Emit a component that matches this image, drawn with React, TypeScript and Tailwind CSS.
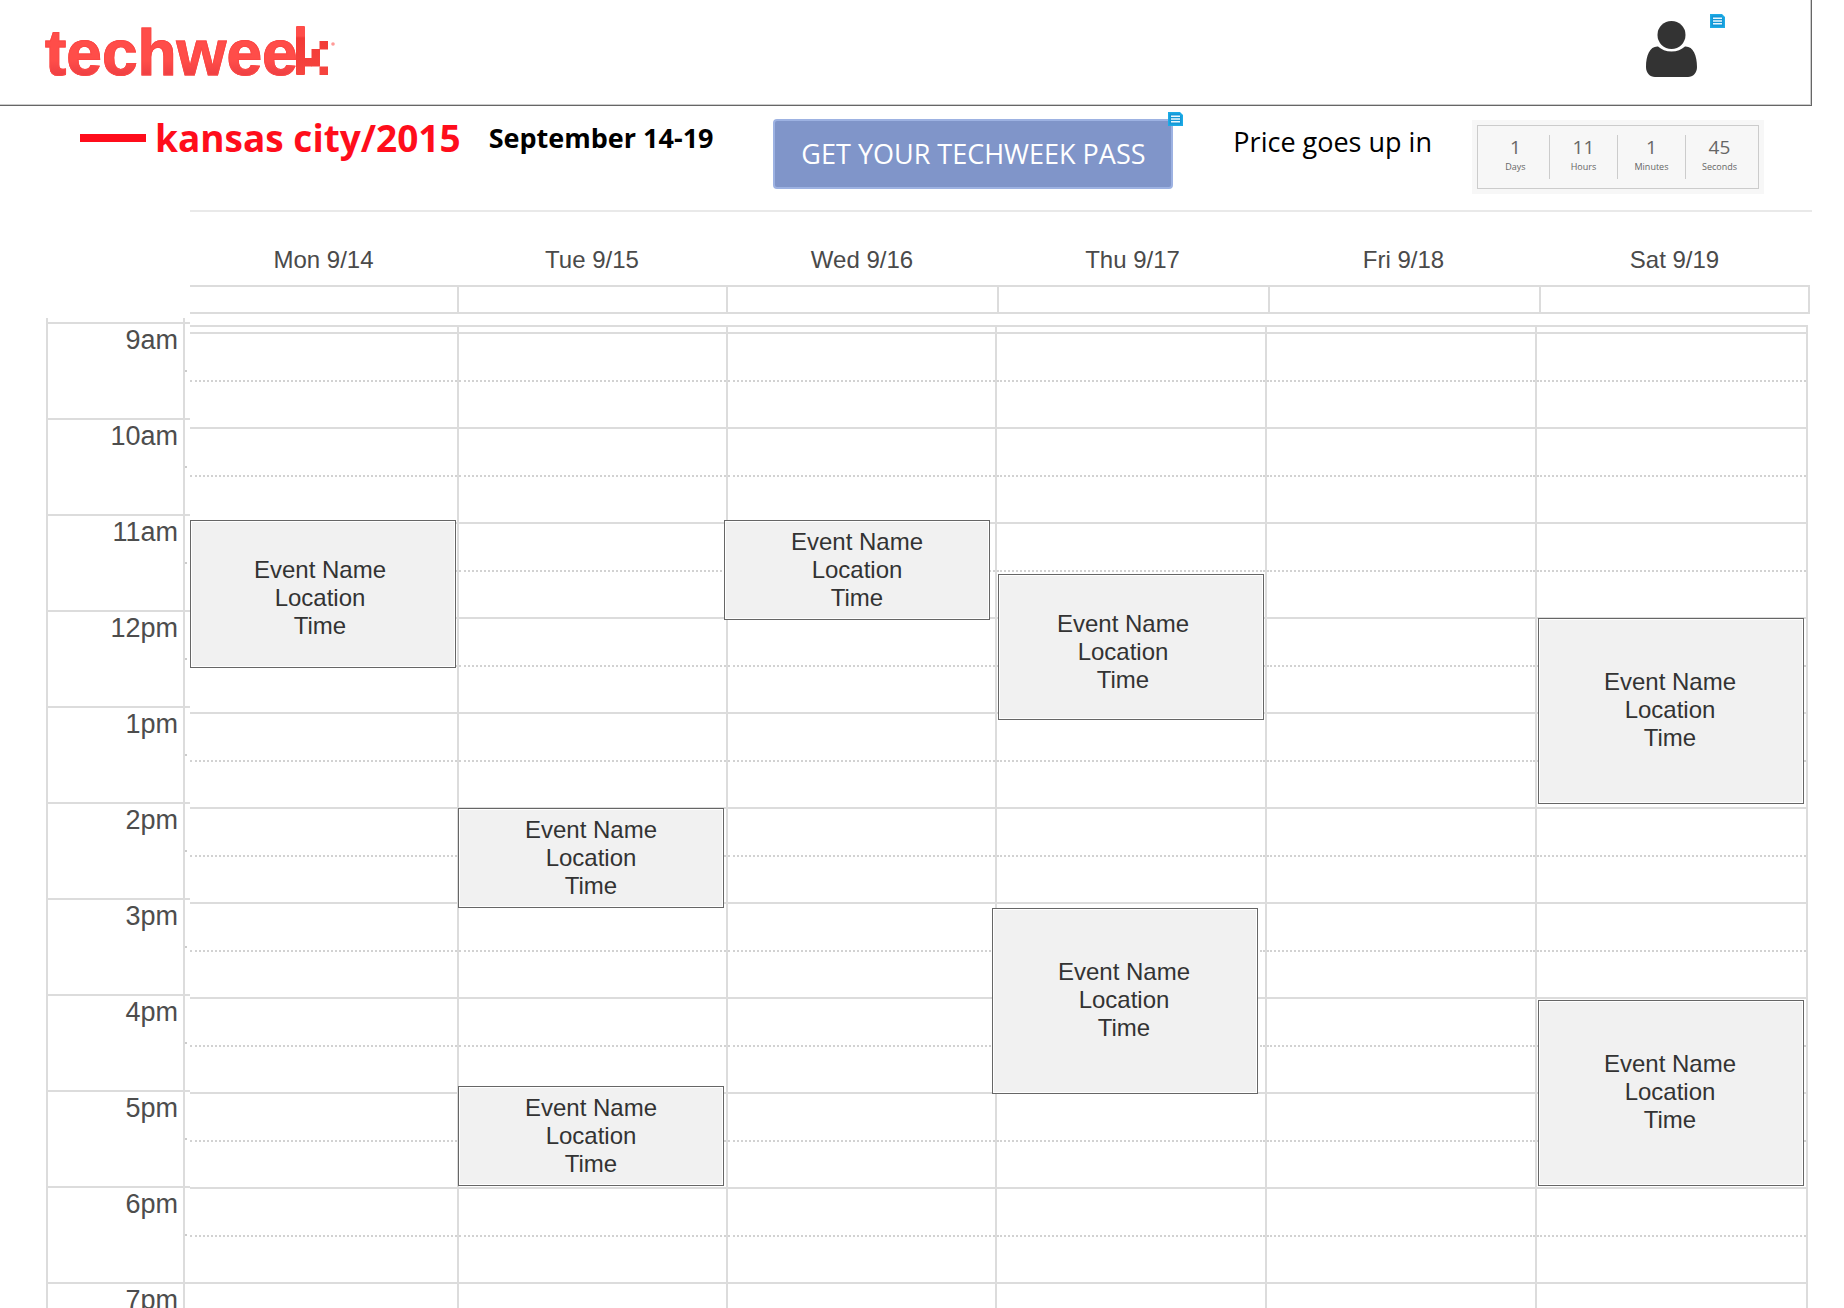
type CalendarEvent = {
  top: number;
  height: number;
  left: number;
  right: number;
  pad?: string;
};

type Day = { label: string; events: CalendarEvent[] };

const days: Day[] = [
  { label: "Mon 9/14", events: [{ top: 193, height: 148, left: 0, right: 1, pad: "pt-2 pr-[6px]" }] },
  {
    label: "Tue 9/15",
    events: [
      { top: 481, height: 100, left: -1, right: 2 },
      { top: 759, height: 100, left: -1, right: 2 },
    ],
  },
  { label: "Wed 9/16", events: [{ top: 193, height: 100, left: -4, right: 5 }] },
  {
    label: "Thu 9/17",
    events: [
      { top: 247, height: 146, left: 1, right: 1, pad: "pt-[10px] pr-4" },
      { top: 581, height: 186, left: -5, right: 7, pad: "pr-[2px] pb-[2px]" },
    ],
  },
  { label: "Fri 9/18", events: [] },
  {
    label: "Sat 9/19",
    events: [
      { top: 291, height: 186, left: 1, right: 2, pad: "pr-[2px] pb-[2px]" },
      { top: 673, height: 186, left: 1, right: 2, pad: "pr-[2px] pb-[2px]" },
    ],
  },
];

const hours = ["9am", "10am", "11am", "12pm", "1pm", "2pm", "3pm", "4pm", "5pm", "6pm", "7pm"];

const countdown = [
  { value: "1", unit: "Days" },
  { value: "11", unit: "Hours" },
  { value: "1", unit: "Minutes" },
  { value: "45", unit: "Seconds" },
];

function NoteIcon() {
  return (
    <svg width="15" height="14" viewBox="0 0 15 14" aria-hidden="true">
      <path d="M0 0h12l3 3v11H0z" fill="#1cabe6" />
      <path d="M1.500 1.500h10.500v2h1.500v9H1.500z" fill="#1597d6" />
      <path d="M3 3.500h9v1.500H3zM3 6.200h9v1.500H3zM3 9h9v1.500H3z" fill="#e9f7fd" />
    </svg>
  );
}

function Logo() {
  return (
    <a href="#" aria-label="techweek" className="flex items-end">
      <span className="bg-linear-to-b from-[#ff4d49] from-60% to-[#ee3f43] to-80% bg-clip-text text-[64px] leading-[74px] font-bold text-transparent [-webkit-text-stroke:1px_#fb4744]">
        techwee
      </span>
      <svg width="41" height="50" viewBox="0 0 41 50" className="mb-[14px] -ml-[3px]" aria-hidden="true">
        <defs>
          <linearGradient id="mark" x1="0" y1="0" x2="0" y2="50" gradientUnits="userSpaceOnUse">
            <stop offset="0" stopColor="#ff4d49" />
            <stop offset="0.2" stopColor="#ff4d49" />
            <stop offset="0.24" stopColor="#f23a36" />
            <stop offset="1" stopColor="#f6453f" />
          </linearGradient>
        </defs>
        <g fill="url(#mark)">
          <rect x="1" y="0" width="9" height="49" rx="1" />
          <rect x="9" y="32" width="8" height="8.500" />
          <rect x="16.500" y="23" width="8.500" height="17.500" />
          <rect x="24.500" y="15" width="8.500" height="8.500" />
          <rect x="24.500" y="40.500" width="8.500" height="8.500" />
        </g>
        <circle cx="38" cy="18" r="1.800" fill="#ff9a97" />
      </svg>
    </a>
  );
}

function EventCard({ event }: { event: CalendarEvent }) {
  return (
    <article
      className={`absolute z-10 flex flex-col items-center justify-center border border-[#666] bg-[#f1f1f1] text-2xl leading-7 text-[#333] inset-shadow-[0_0_0_1px_#fff] ${event.pad ?? ""}`}
      style={{ top: event.top, height: event.height, left: event.left, right: event.right }}
    >
      <p>Event Name</p>
      <p>Location</p>
      <p>Time</p>
    </article>
  );
}

export default function App() {
  return (
    <div className="h-screen overflow-hidden bg-white font-['Liberation_Sans',Arial,sans-serif]">
      <header className="mr-8 flex h-[106px] justify-between border-r border-b border-[#666] pl-[45px] shadow-[inset_-1px_-1px_0_#ccc]">
        <div className="pt-4">
          <Logo />
        </div>
        <div className="mr-[86px] flex gap-3 pt-[14px]">
          <button type="button" aria-label="Account" className="h-14 pt-[7px]">
            <svg width="52" height="56" viewBox="0 0 52 56" aria-hidden="true" fill="#333">
              <circle cx="25.500" cy="14" r="14" />
              <path d="M12 25.500C15.500 28.500 20 30.500 25.500 30.500S35.500 28.500 39 25.500C47 25 51 34 51 46C51 52 47 56 42 56H9C4 56 0 52 0 46C0 34 4 25 12 25.500Z" />
            </svg>
          </button>
          <NoteIcon />
        </div>
      </header>

      <section className="flex h-[104px] items-start justify-between px-20 font-['Open_Sans',sans-serif]">
        <div className="flex h-16 items-center">
          <span className="mr-[9px] h-2 w-[66px] bg-[#ff0d1b]" />
          <h1 className="mr-7 text-[37px] leading-[44px] font-bold text-[#ff0d1b]">kansas city/2015</h1>
          <h2 className="text-[27px] leading-[44px] font-bold text-black">September 14-19</h2>
        </div>
        <div className="relative mt-[13px]">
          <button
            type="button"
            className="h-[70px] w-[400px] rounded border-2 border-[#9db2e2] bg-[#8095c9] text-[27px] text-white"
          >
            GET YOUR TECHWEEK PASS
          </button>
          <span className="absolute -top-[7px] -right-[10px]">
            <NoteIcon />
          </span>
        </div>
        <div className="flex gap-10">
          <p className="pt-4 text-[27px] leading-10 text-black">Price goes up in</p>
          <div className="mt-[14px] h-[74px] bg-[#f7f7f7] p-[5px]">
            <dl className="flex h-16 w-[282px] border border-[#ccc] py-[9px] pr-[5px] pl-1">
              {countdown.map((c) => (
                <div
                  key={c.unit}
                  className="flex flex-1 flex-col-reverse items-center justify-center border-r border-[#ccc] pb-1 text-[#666] last:border-r-0"
                >
                  <dt className="text-[9px] leading-4">{c.unit}</dt>
                  <dd className="text-[19px] leading-6">{c.value}</dd>
                </div>
              ))}
            </dl>
          </div>
        </div>
      </section>

      <div className="mr-8 ml-[190px] border-t-2 border-[#e9e9e9] pt-[34px]">
        <div className="mr-[2px] grid grid-cols-[267fr_270fr_270fr_271fr_271fr_271fr] text-center text-2xl leading-7 text-[#4a4a4a]">
          {days.map((d) => (
            <div key={d.label}>{d.label}</div>
          ))}
        </div>
        <div className="mt-[11px] mr-[2px] grid h-[29px] grid-cols-[269fr_269fr_271fr_271fr_271fr_269fr] border-y-2 border-[#dcdcdc]">
          {days.map((d) => (
            <div key={d.label} className="border-r-2 border-[#dcdcdc]" />
          ))}
        </div>
      </div>

      <main className="mr-9 ml-[46px] flex items-start pt-1">
        <div className="w-36 shrink-0">
          <div className="mr-[5px] h-1 border-x-2 border-[#dcdcdc]" />
          {hours.map((h) => (
            <div key={h} className="flex h-24">
              <div className="w-[139px] border-x-2 border-t-2 border-[#dcdcdc] pr-[5px] text-right text-[27px] leading-8 text-[#4d4d4d]">
                {h}
              </div>
              <div className="w-[5px] border-t-2 border-[#dcdcdc]">
                <div className="h-12 w-[2px] border-b-2 border-dotted border-[#ccc]" />
              </div>
            </div>
          ))}
        </div>
        <div className="mt-[7px] grid flex-1 grid-cols-[269fr_269fr_269fr_270fr_270fr_271fr] border-t-2 border-[#dcdcdc]">
          {days.map((d) => (
            <div key={d.label} className="relative border-r-2 border-[#dcdcdc] pt-[5px]">
              {hours.map((h) => (
                <div key={h} className="h-[95px] border-t-2 border-[#dcdcdc]">
                  <div className="h-12 border-b-2 border-dotted border-[#d2d2d2]" />
                </div>
              ))}
              {d.events.map((e) => (
                <EventCard key={e.top} event={e} />
              ))}
            </div>
          ))}
        </div>
      </main>
    </div>
  );
}
